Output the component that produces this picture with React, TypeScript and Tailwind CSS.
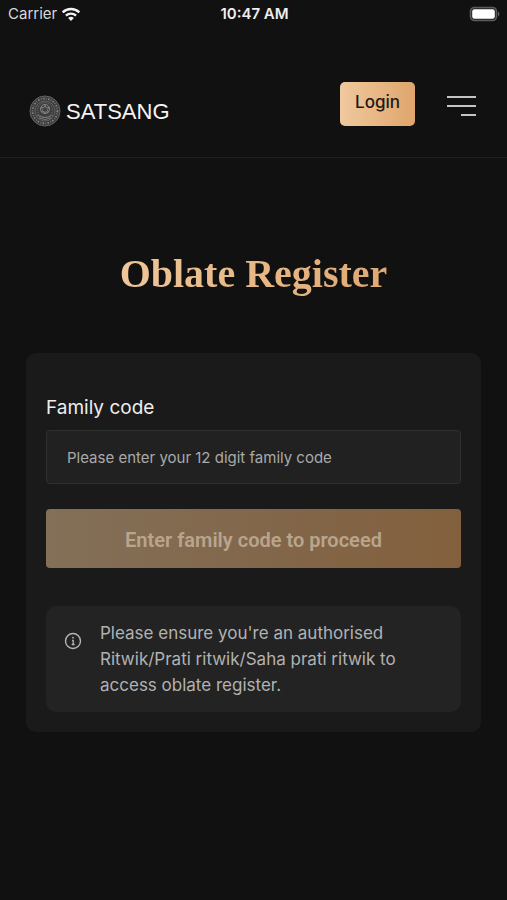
function WifiIcon() {
  return (
    <svg className="h-[15px] w-5" viewBox="0 0 20 15" fill="none" stroke="#f2f2f2" aria-hidden="true">
      <path d="M1.7 5.3a12 12 0 0 1 16.6 0" strokeWidth="2.5" />
      <path d="M4.9 8.6a7.4 7.4 0 0 1 10.2 0" strokeWidth="2.3" />
      <path d="M10 14 7.1 11.1a4.2 4.2 0 0 1 5.8 0Z" fill="#f2f2f2" stroke="none" />
    </svg>
  );
}

function BatteryIcon() {
  return (
    <svg className="h-4 w-8" viewBox="0 0 32 16" aria-hidden="true">
      <rect x="1.5" y="1.5" width="26" height="13" rx="4" fill="#222" stroke="#5c5c5c" strokeWidth="1.6" />
      <rect x="3.2" y="3.2" width="22.6" height="9.6" rx="2.2" fill="#fff" />
      <path d="M29 5.6c1.8.7 1.8 4.1 0 4.8Z" fill="#666" />
    </svg>
  );
}

function Emblem() {
  return (
    <svg className="size-8 shrink-0" viewBox="0 0 32 32" fill="none" aria-hidden="true">
      <circle cx="16" cy="16" r="15" fill="#3d3d3d" stroke="#656565" />
      <circle cx="16" cy="16" r="12.4" stroke="#888" strokeWidth="1.6" strokeDasharray="1.5 1.3 .7 1.6" />
      <circle cx="16" cy="16" r="10" stroke="#717171" strokeWidth=".7" />
      <circle cx="16" cy="15" r="7.4" stroke="#777" strokeDasharray="1 1" />
      <circle cx="16" cy="14" r="4.5" stroke="#969696" strokeWidth=".8" />
      <path d="m16 10 1.1 2.8 2.9-.3-1.9 2.2 1.5 2.6-3-.6L16 19l-.8-2.6-3 .5 1.8-2.3-1.8-2.3 2.9.3Z" stroke="#909090" strokeWidth=".7" />
      <path d="M8 20q8 5 16 0M10 23q6 3 12 0" stroke="#888" strokeWidth=".8" />
    </svg>
  );
}

function InfoIcon() {
  return (
    <svg className="mt-3 size-[18px] shrink-0" viewBox="0 0 18 18" fill="none" stroke="#b5b5b5" aria-hidden="true">
      <circle cx="9" cy="9" r="7.5" strokeWidth="1.4" />
      <path d="M8 8.3h1.2v4M7.7 12.5h3" strokeWidth="1.3" />
      <circle cx="9" cy="5.7" r=".9" fill="#b5b5b5" stroke="none" />
    </svg>
  );
}

export default function App() {
  return (
    <div className="min-h-screen bg-[#111111] font-['Inter',sans-serif] text-white">
      <div className="grid h-7 grid-cols-3 items-center pr-1.5 pl-2 text-[15px]">
        <div className="flex items-center gap-1 text-[#d8d8d8]">
          <span>Carrier</span>
          <WifiIcon />
        </div>
        <time className="text-center font-semibold whitespace-nowrap text-[#eeeeee]">10:47 AM</time>
        <div className="flex justify-end">
          <BatteryIcon />
        </div>
      </div>

      <header className="flex h-[130px] items-start justify-between border-b border-[#1f1f1f] pt-[54px] pr-[31px] pl-[29px]">
        <a href="#" className="mt-3 flex items-center gap-[5px]">
          <Emblem />
          <span className="pt-0.5 font-['Liberation_Sans',Arial,sans-serif] text-[22px] leading-8 text-[#f5f5f5]">SATSANG</span>
        </a>
        <div className="flex items-center gap-8">
          <button type="button" className="h-11 w-[75px] rounded-[5px] bg-linear-to-r from-[#f0c99e] to-[#dfa56c] pb-0.5 text-[17px] font-medium text-[#1c1916]">
            Login
          </button>
          <button type="button" aria-label="Menu" className="mt-1 flex flex-col items-end gap-[7px]">
            <span className="h-0.5 w-[29px] bg-[#c4c4c4]" />
            <span className="h-0.5 w-[29px] bg-[#c4c4c4]" />
            <span className="h-0.5 w-[15px] bg-[#c4c4c4]" />
          </button>
        </div>
      </header>

      <main className="px-[26px] pt-[90px] pb-12">
        <h1 className="text-center font-['Liberation_Serif','Times_New_Roman',serif] text-[40px] leading-[52px] font-bold">
          <span className="bg-linear-to-r from-[#efc79a] to-[#dfa972] bg-clip-text text-transparent">Oblate Register</span>
        </h1>

        <form className="mt-[53px] rounded-[10px] bg-[#1a1a1a] px-5 pt-10 pb-5">
          <label htmlFor="family-code" className="block pt-px text-[19px] leading-7 text-[#eeeeee]">
            Family code
          </label>
          <input
            id="family-code"
            type="text"
            placeholder="Please enter your 12 digit family code"
            className="mt-2 block h-[54px] w-full rounded border border-[#303030] bg-[#212121] px-5 text-[15px] text-white outline-none placeholder:text-[#aaaaaa]"
          />
          <button
            type="submit"
            disabled
            className="mt-[25px] block h-[59px] w-full rounded bg-linear-to-r from-[#837058] via-[#82674b] to-[#83603d] pt-0.5 font-['Roboto',sans-serif] text-[20px] font-semibold text-[#b9a58d]"
          >
            Enter family code to proceed
          </button>
          <div className="mt-[38px] flex gap-[18px] rounded-[10px] bg-[#232323] px-[18px] py-3.5 text-[#b2b2b2]">
            <InfoIcon />
            <p className="max-w-[300px] text-[17px] leading-[26px]">
              Please ensure you're an authorised Ritwik/Prati ritwik/Saha prati ritwik to access oblate register.
            </p>
          </div>
        </form>
      </main>
    </div>
  );
}
